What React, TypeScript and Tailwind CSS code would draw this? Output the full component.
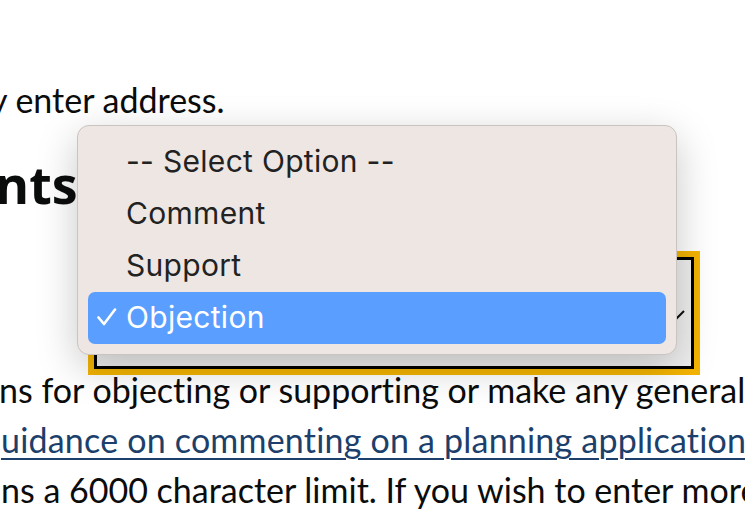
import React from 'react';

const options = ['-- Select Option --', 'Comment', 'Support', 'Objection'];

export default function App() {
  const selected = 'Objection';

  return (
    <div className="relative h-[517px] w-[745px] overflow-hidden bg-white text-[#0b0c0c]">
      <div className="pt-[80px] font-['Lato',sans-serif] [font-variant-ligatures:none]">
        <p className="-ml-[10px] whitespace-nowrap text-[34px] leading-[40px]">y enter address.</p>
        <h2 className="-ml-[5px] mt-[35px] whitespace-nowrap font-['Open_Sans',sans-serif] text-[52px] font-bold leading-[58px]">
          nts
        </h2>

        <div className="ml-[88px] mt-[38px] w-[612px] border-[6px] border-[#f4b400]">
          <div className="flex h-[112px] items-center justify-end border-[3px] border-black bg-[#efefef] pr-[6px]">
            <svg width="16" height="10" viewBox="0 0 16 10" className="mt-[4px]">
              <path d="M1 1 L8 8 L15 1" fill="none" stroke="#111" strokeWidth="2" />
            </svg>
          </div>
        </div>

        <div className="-mt-[10px] whitespace-nowrap text-[34px] leading-[50px]">
          <p className="-ml-[1px]">ns for objecting or supporting or make any general comments.</p>
          <p className="ml-[1px] tracking-[0.2px]">
            <a href="#" className="text-[#1d3f6b] underline decoration-[2px] underline-offset-[5px]">
              uidance on commenting on a planning application
            </a>
          </p>
          <p className="ml-[1px]">ns a 6000 character limit. If you wish to enter more</p>
        </div>
      </div>

      <div className="absolute left-[77px] top-[125px] w-[600px] rounded-[12px] border border-[#c9c4c1] bg-[#ede6e2] px-[10px] pb-[10px] pt-[10px] font-['Inter',sans-serif] shadow-[0_12px_40px_rgba(0,0,0,0.22)]">
        {options.map((o) => {
          const active = o === selected;
          return (
            <div
              key={o}
              className={`flex h-[52px] items-center rounded-[7px] pb-[2px] text-[30px] tracking-[0.3px] ${active ? 'bg-[#5a9fff] text-white' : 'text-[#222]'}`}
            >
              <span className="flex w-[38px] justify-start pl-[9px]">
                {active && (
                  <svg width="20" height="18" viewBox="0 0 20 18">
                    <path d="M1.5 9.5 L7 16 L18 1.5" fill="none" stroke="#fff" strokeWidth="2.6" strokeLinecap="round" strokeLinejoin="round" />
                  </svg>
                )}
              </span>
              <span>{o}</span>
            </div>
          );
        })}
      </div>
    </div>
  );
}
